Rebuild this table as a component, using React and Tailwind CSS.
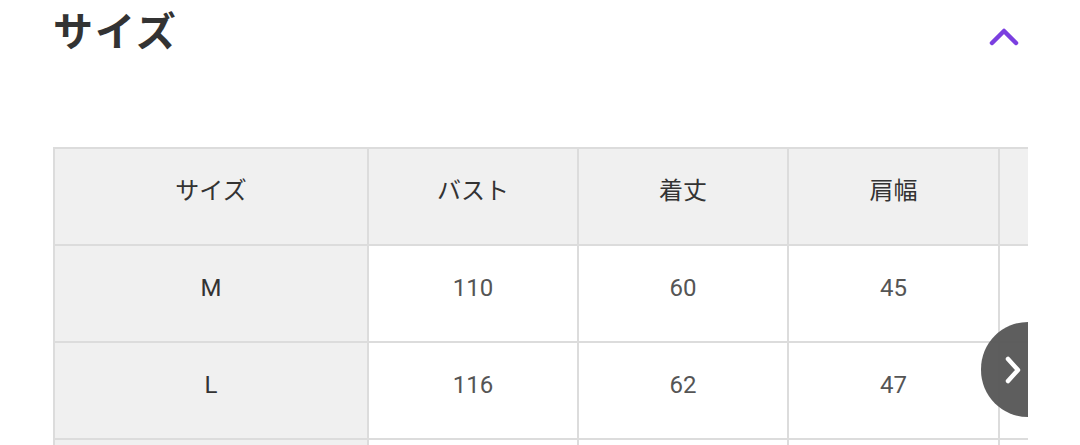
import React from 'react';

const cols = ['サイズ', 'バスト', '着丈', '肩幅', '袖丈'];
const rows = [
  ['M', '110', '60', '45', '50'],
  ['L', '116', '62', '47', '52'],
  ['XL', '122', '64', '49', '54'],
];

const widths = 'grid-cols-[314px_210px_210px_211px_210px]';
const font = { fontFamily: 'Roboto, "Noto Sans CJK JP", "Noto Sans", sans-serif' };

export default function App() {
  return (
    <div className="w-[1080px] h-[445px] overflow-hidden bg-white" style={font}>
      <div className="flex items-start justify-between pl-[53px] pr-[60px] pt-[6px]">
        <h2 className="text-[40px] font-bold leading-[54px] text-[#333] tracking-[2px]">サイズ</h2>
        <button className="mt-[21px] w-[32px] h-[20px] flex items-center justify-center">
          <svg width="30" height="18" viewBox="0 0 30 18" fill="none">
            <path d="M3 15 L15 3 L27 15" stroke="#7b3fe0" strokeWidth="4.5" strokeLinecap="round" strokeLinejoin="round" />
          </svg>
        </button>
      </div>

      <div className="relative ml-[53px] mt-[87px] w-[975px] overflow-hidden">
        <div className="w-[1155px] border-b-2 border-[#dcdcdc]">
          <div className={`grid ${widths}`}>
            {cols.map((c) => (
              <div key={c} className="h-[97px] border-t-2 border-l-2 border-[#dcdcdc] bg-[#f0f0f0] flex items-center justify-center pb-[12px] text-[24px] text-[#333]">
                {c}
              </div>
            ))}
          </div>
          {rows.map((r) => (
            <div key={r[0]} className={`grid ${widths}`}>
              {r.map((v, i) => (
                <div
                  key={i}
                  className={`h-[97px] border-t-2 border-l-2 border-[#dcdcdc] flex items-center justify-center pb-[12px] text-[24px] ${i === 0 ? 'bg-[#f0f0f0] text-[#333]' : 'bg-white text-[#555]'}`}
                >
                  {v}
                </div>
              ))}
            </div>
          ))}
        </div>

        <button className="absolute right-0 top-[175px] w-[47px] h-[95px] rounded-l-full bg-[#555]/95 flex items-center justify-end pr-[5px]">
          <svg width="20" height="30" viewBox="0 0 20 30" fill="none">
            <path d="M5 4 L15 15 L5 26" stroke="#fff" strokeWidth="4.5" strokeLinecap="round" strokeLinejoin="round" />
          </svg>
        </button>
      </div>
    </div>
  );
}
